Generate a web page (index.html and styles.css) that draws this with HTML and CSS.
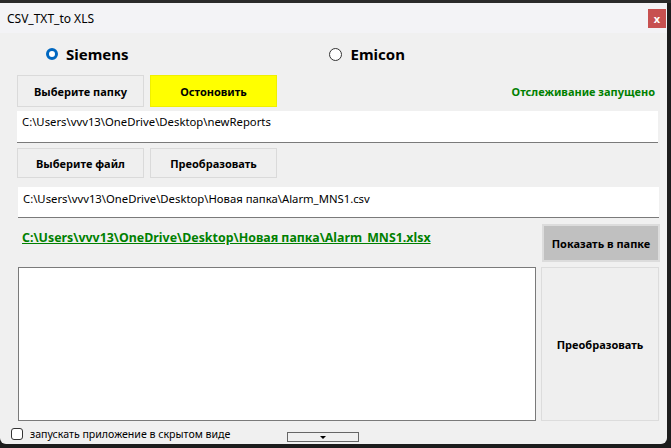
FILE: index.html
```html
<!DOCTYPE html>
<html>
<head>
<meta charset="utf-8">
<link rel="stylesheet" href="styles.css">
</head>
<body>
<div class="desk-top"></div>
<div class="window">
  <div class="titlebar">
    <span class="title">CSV_TXT_to XLS</span>
    <span class="close">x</span>
  </div>
  <div class="content">
    <div class="radios">
      <label class="radio sel"><span class="dot"></span>Siemens</label>
      <label class="radio emi"><span class="dot"></span>Emicon</label>
    </div>
    <div class="row r1">
      <button class="btn">Выберите папку</button>
      <button class="btn yellow">Остоновить</button>
      <span class="status">Отслеживание запущено</span>
    </div>
    <div class="field f1">C:\Users\vvv13\OneDrive\Desktop\newReports</div>
    <div class="row r2">
      <button class="btn">Выберите файл</button>
      <button class="btn">Преобразовать</button>
    </div>
    <div class="field f2">C:\Users\vvv13\OneDrive\Desktop\Новая папка\Alarm_MNS1.csv</div>
    <div class="row r3">
      <a class="link">C:\Users\vvv13\OneDrive\Desktop\Новая папка\Alarm_MNS1.xlsx</a>
      <button class="btn gray">Показать в папке</button>
    </div>
    <div class="row r4">
      <div class="area"></div>
      <button class="btn big">Преобразовать</button>
    </div>
    <div class="footer">
      <span class="check"></span>
      <span class="clabel">запускать приложение в скрытом виде</span>
      <span class="combo"><span class="tri"></span></span>
    </div>
  </div>
</div>
</body>
</html>
```

FILE: styles.css
```css
html, body { margin: 0; padding: 0; }
body {
  width: 671px; height: 448px; overflow: hidden;
  background: #1c1c1c;
  font-family: "Noto Sans", "Open Sans", sans-serif;
}
.desk-top { height: 3px; background: #2a2a2a; }
.window {
  width: 667px; height: 441px;
  background: #f0f0f0;
  border-radius: 0 0 6px 6px;
  display: flex; flex-direction: column;
}
.titlebar {
  height: 30px; background: #f3f3f6;
  display: flex; align-items: center; justify-content: space-between;
}
.title { font-size: 12px; color: #000; margin-left: 7px; }
.close {
  width: 18px; height: 19px; margin-right: 1px;
  background: #c75050; color: #fff; font-size: 11px; font-weight: bold;
  display: flex; align-items: center; justify-content: center;
  line-height: 1;
}
.content { display: flex; flex-direction: column; padding-left: 17px; }
.radios { display: flex; align-items: center; height: 16px; margin-top: 13px; }
.radio { display: flex; align-items: center; font-size: 15px; font-weight: bold; color: #000; }
.radio .dot {
  width: 12px; height: 12px; border-radius: 50%; box-sizing: border-box;
  border: 1px solid #333; margin-right: 8px; background: #fff;
}
.radio.sel { margin-left: 29px; }
.radio.sel .dot { border: 3.5px solid #0067c0; background: #fff; }
.radio.emi { margin-left: 200px; }
.radio.emi .dot { width: 13px; height: 13px; margin-right: 9px; }
.btn {
  font-family: inherit; font-size: 11px; font-weight: bold; color: #000;
  background: #efefef; border: 1px solid #dadada; padding: 0; margin: 0;
  width: 127px; box-sizing: border-box;
}
.row { display: flex; align-items: center; }
.r1 { margin-top: 13px; height: 32px; }
.r1 .btn { height: 32px; }
.btn + .btn { margin-left: 6px; }
.yellow { background: #ffff00; border-color: #f0f000; }
.status { margin-left: auto; margin-right: 12px; font-size: 11px; font-weight: bold; color: #008000; }
.field {
  background: #fff; border-bottom: 1px solid #7a7a7a;
  font-size: 11.3px; color: #000; box-sizing: border-box;
  padding: 3px 5px; width: 641px;
}
.f1 { margin-top: 4px; height: 32px; }
.r2 { margin-top: 5px; height: 30px; }
.r2 .btn { height: 30px; }
.f2 { margin-top: 9px; height: 31px; margin-left: 1px; padding-top: 4px; }
.r3 { margin-top: 6px; height: 38px; }
.link {
  font-size: 12.4px; font-weight: bold; color: #008000; text-decoration: underline;
  margin-left: 5px; align-self: flex-start; margin-top: 5px;
}
.gray {
  margin-left: auto; margin-right: 7px; width: 118px; height: 38px;
  background: #c0c0c0; border: 2px solid #dcdcdc;
}
.r4 { margin-top: 5px; align-items: stretch; height: 154px; }
.area { width: 518px; margin-left: 1px; background: #fff; border: 1px solid #7a7a7a; box-sizing: border-box; }
.big { margin-left: 5px !important; width: 118px; border-color: #dcdcdc; }
.footer { display: flex; align-items: center; margin-top: 6px; margin-left: -6px; height: 14px; }
.check { width: 12px; height: 12px; border: 1px solid #333; border-radius: 3px; box-sizing: border-box; background: #fff; }
.clabel { font-size: 10.6px; color: #000; margin-left: 7px; }
.combo {
  margin-left: 57px; width: 72px; height: 10px; box-sizing: border-box;
  border: 1px solid #666; display: flex; justify-content: center; align-items: center;
  margin-top: 6px;
}
.tri { width: 0; height: 0; border-left: 3px solid transparent; border-right: 3px solid transparent; border-top: 3px solid #000; }
```
